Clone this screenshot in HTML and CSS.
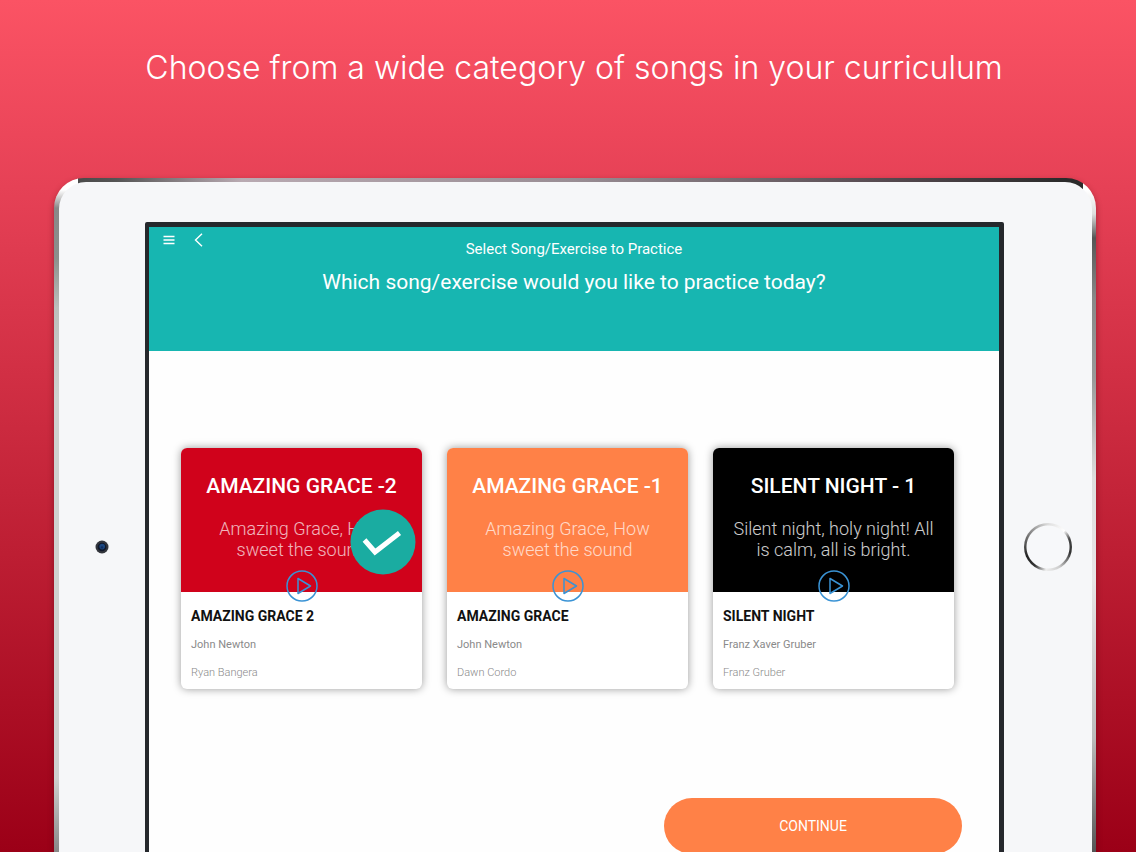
FILE: index.html
```
<!DOCTYPE html>
<html lang="en">
<head>
  <meta charset="UTF-8" />
  <meta name="viewport" content="width=device-width, initial-scale=1" />
  <title>Choose your songs</title>
  <link rel="stylesheet" href="styles.css">
</head>
<body>
  <h1 class="tagline">Choose from a wide category of songs in your curriculum</h1>

  <div class="tablet">
    <div class="bezel">
      <!-- Camera -->
      <div class="bezel-side">
        <svg class="camera" viewBox="0 0 14 14" aria-hidden="true">
          <circle cx="7" cy="7" r="6.5" fill="#33363d"/>
          <circle cx="7" cy="7" r="4.3" fill="#10182a"/>
          <circle cx="7.2" cy="6.6" r="2.8" fill="#1c4780"/>
          <circle cx="7" cy="7.4" r="1.2" fill="#102c5c"/>
        </svg>
      </div>

      <div class="screen">
        <header class="app-header">
          <nav class="app-nav">
            <button type="button" class="icon-btn" aria-label="Menu">
              <svg width="12" height="12" viewBox="0 0 12 12" aria-hidden="true">
                <path d="M0.5 2.5h11M0.5 6h11M0.5 9.5h11" stroke="#fff" stroke-width="1.5"/>
              </svg>
            </button>
            <button type="button" class="icon-btn" aria-label="Back">
              <svg width="12" height="14" viewBox="0 0 12 14" aria-hidden="true">
                <path d="M9 0.8L2.500 7L9 13.2" fill="none" stroke="#fff" stroke-width="1.4"/>
              </svg>
            </button>
          </nav>
          <p class="app-title">Select Song/Exercise to Practice</p>
          <h2 class="app-question">Which song/exercise would you like to practice today?</h2>
        </header>

        <main class="content">
          <div class="songs">
            <!-- Song 1, selected -->
            <article class="card">
              <div class="cover red">
                <h3>AMAZING GRACE -2</h3>
                <p>Amazing Grace, How sweet the sound</p>
                <svg class="selected" viewBox="0 0 66 66" role="img" aria-label="Selected">
                  <circle cx="33" cy="33" r="32.5" fill="#1aaca1"/>
                  <path d="M14.500 31l10.500 12L49.500 24" fill="none" stroke="#fff" stroke-width="5"/>
                </svg>
                <button type="button" class="play" aria-label="Play Amazing Grace 2">
                  <svg width="32" height="32" viewBox="0 0 32 32" aria-hidden="true">
                    <circle cx="16" cy="16" r="15"/>
                    <path d="M12 8.500v15L24.500 16z"/>
                  </svg>
                </button>
              </div>
              <div class="info">
                <h4>AMAZING GRACE 2</h4>
                <p class="composer">John Newton</p>
                <p class="singer">Ryan Bangera</p>
              </div>
            </article>

            <!-- Song 2 -->
            <article class="card">
              <div class="cover orange">
                <h3>AMAZING GRACE -1</h3>
                <p>Amazing Grace, How sweet the sound</p>
                <button type="button" class="play" aria-label="Play Amazing Grace">
                  <svg width="32" height="32" viewBox="0 0 32 32" aria-hidden="true">
                    <circle cx="16" cy="16" r="15"/>
                    <path d="M12 8.500v15L24.500 16z"/>
                  </svg>
                </button>
              </div>
              <div class="info">
                <h4>AMAZING GRACE</h4>
                <p class="composer">John Newton</p>
                <p class="singer">Dawn Cordo</p>
              </div>
            </article>

            <!-- Song 3 -->
            <article class="card">
              <div class="cover black">
                <h3>SILENT NIGHT - 1</h3>
                <p>Silent night, holy night! All is calm, all is bright.</p>
                <button type="button" class="play" aria-label="Play Silent Night">
                  <svg width="32" height="32" viewBox="0 0 32 32" aria-hidden="true">
                    <circle cx="16" cy="16" r="15"/>
                    <path d="M12 8.500v15L24.500 16z"/>
                  </svg>
                </button>
              </div>
              <div class="info">
                <h4>SILENT NIGHT</h4>
                <p class="composer">Franz Xaver Gruber</p>
                <p class="singer">Franz Gruber</p>
              </div>
            </article>
          </div>

          <button type="button" class="continue">CONTINUE</button>
        </main>
      </div>

      <!-- Home button -->
      <div class="bezel-side">
        <div class="home"></div>
      </div>
    </div>
  </div>
</body>
</html>
```

FILE: styles.css
```
/* Reset & base */
* {
  box-sizing: border-box;
}

body {
  margin: 0;
  height: 100vh;
  overflow: hidden;
  font-family: Roboto, sans-serif;
  background: linear-gradient(180deg, #fb5364 0%, #e64156 22%, #bd1e33 65%, #9b0017 100%);
}

h1, h2, h3, h4, p {
  margin: 0;
}

button {
  font-family: inherit;
  border: none;
  padding: 0;
  background: none;
  cursor: pointer;
}

svg {
  display: block;
}

.tagline {
  padding: 44px 0 86px 12px;
  font-family: Inter, sans-serif;
  font-weight: 300;
  font-size: 32px;
  line-height: 48px;
  color: #fff;
  text-align: center;
}

/* Tablet: metal edge around the white bezel */
.tablet {
  margin: 0 40px 0 54px;
  padding: 4px 4px 4px 5px;
  border-radius: 30px;
  background:
    linear-gradient(180deg, #fff 12px, #888 30px, #8c908c 80px, #bcbfbc 130px, #cfd1cf 220px, #cfd1cf 600px, #888 674px) left / 24px 100% no-repeat,
    linear-gradient(180deg, #fff 12px, #ddd 36px, #555 60px, #888 120px, #999 200px, #ddd 300px, #e8e4e6 400px, #bbb 560px, #555 674px) right / 13px 100% no-repeat,
    linear-gradient(90deg, #444 0%, #555 6%, #b9aab2 18%, #998d94 50%, #55494f 80%, #2b2b2b 97%);
  box-shadow: 0 3px 6px rgba(80, 0, 15, 0.45);
}

.bezel {
  display: grid;
  grid-template-columns: 86px 1fr 88px;
  align-items: center;
  padding: 40px 0 44px;
  border-radius: 27px;
  background: #f6f7f9;
}

.bezel-side {
  display: flex;
  justify-content: center;
}

.camera {
  width: 14px;
  height: 14px;
}

.home {
  width: 48px;
  height: 48px;
  border-radius: 50%;
  background:
    radial-gradient(circle, #f7f8fa 21px, transparent 22px),
    conic-gradient(#ddd 0deg, #fff 45deg, #444 70deg, #333 105deg, #ccc 150deg, #eee 185deg, #333 215deg, #222 245deg, #777 300deg, #ddd 360deg);
}

.screen {
  border: 4px solid #25282c;
  border-width: 5px 5px 5px 4px;
  border-radius: 2px;
  background: #fefefe;
}

/* App header */
.app-header {
  position: relative;
  height: 124px;
  padding-top: 10px;
  background: #17b6b1;
  color: #fff;
  text-align: center;
}

.app-nav {
  position: absolute;
  top: 6px;
  left: 14px;
  display: flex;
  align-items: center;
  gap: 18px;
}

.icon-btn {
  width: 12px;
  height: 14px;
}

.app-title {
  font-size: 15px;
  line-height: 24px;
}

.app-question {
  margin-top: 7px;
  font-weight: 400;
  font-size: 21px;
  line-height: 28px;
}

/* Songs */
.content {
  display: flex;
  flex-direction: column;
  padding: 97px 37px 12px 32px;
}

.songs {
  display: flex;
  gap: 25px;
  padding-right: 8px;
}

.card {
  flex: 1;
  border-radius: 6px;
  background: #fff;
  box-shadow: 0 0 9px rgba(0, 0, 0, 0.4);
}

.cover {
  position: relative;
  height: 144px;
  padding: 26px 16px 0;
  border-radius: 6px 6px 0 0;
  text-align: center;
  color: #fff;
}

.cover h3 {
  font-weight: 500;
  font-size: 21px;
  line-height: 24px;
}

.cover p {
  margin-top: 20px;
  font-weight: 300;
  font-size: 18px;
  line-height: 21px;
  opacity: 0.8;
}

.red { background: #d0021b; }
.orange { background: #ff8147; }
.black { background: #000; }

.orange p,
.red p {
  opacity: 0.7;
}

.selected {
  position: absolute;
  top: 61px;
  right: 6px;
  width: 66px;
  height: 66px;
}

/* Play button sits over the edge of the cover */
.play {
  position: absolute;
  left: 50%;
  bottom: -10px;
  margin-left: -16px;
}

.play svg {
  fill: none;
  stroke: #3a93d5;
  stroke-width: 1.500;
  stroke-linejoin: round;
}

.info {
  padding: 12px 10px 6px;
}

.info h4 {
  font-weight: 700;
  font-size: 14px;
  line-height: 24px;
  color: #111;
}

.info p {
  font-size: 11px;
  line-height: 20px;
}

.composer {
  margin-top: 7px;
  color: #8a8a8a;
}

.info .singer {
  margin-top: 8px;
  font-weight: 300;
  color: #8a8a8a;
}

.continue {
  align-self: flex-end;
  width: 298px;
  height: 56px;
  margin-top: 109px;
  border-radius: 28px;
  background: #ff8147;
  color: #fff;
  font-size: 14px;
}

@media (max-width: 800px) {
  .songs {
    flex-direction: column;
  }
}
```
